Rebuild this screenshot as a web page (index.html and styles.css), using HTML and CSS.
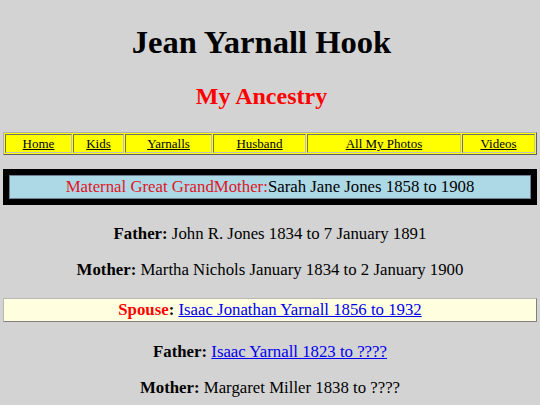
FILE: index.html
```html
<!DOCTYPE html>
<html>
<head>
<meta charset="utf-8">
<title>Jean Yarnall Hook - My Ancestry</title>
<link rel="stylesheet" href="styles.css">
</head>
<body>
<h1 class="title">Jean Yarnall Hook</h1>
<h2 class="subtitle">My Ancestry</h2>
<table class="nav">
<tr>
<td class="c-home"><a href="#">Home</a></td>
<td class="c-kids"><a href="#">Kids</a></td>
<td class="c-yarn"><a href="#">Yarnalls</a></td>
<td class="c-husb"><a href="#">Husband</a></td>
<td class="c-photos"><a href="#">All My Photos</a></td>
<td class="c-videos"><a href="#">Videos</a></td>
</tr>
</table>
<table class="person">
<tr><td><span class="rel">Maternal Great GrandMother:</span>Sarah Jane Jones 1858 to 1908</td></tr>
</table>
<p class="parent"><b>Father:</b> John R. Jones 1834 to 7 January 1891</p>
<p class="parent"><b>Mother:</b> Martha Nichols January 1834 to 2 January 1900</p>
<table class="spouse">
<tr><td><b><span class="sp">Spouse</span>:</b> <a href="#">Isaac Jonathan Yarnall 1856 to 1932</a></td></tr>
</table>
<p class="parent"><b>Father:</b> <a href="#">Isaac Yarnall 1823 to ????</a></p>
<p class="parent"><b>Mother:</b> Margaret Miller 1838 to ????</p>
</body>
</html>
```
FILE: styles.css
```css
html, body {
  background: #d3d3d3;
}
body {
  margin: 8px 3px;
  font-family: "Liberation Serif", "Times New Roman", serif;
  color: #000;
}
.title {
  text-align: center;
  font-size: 32.6px;
  margin: 16px 0 22px;
  padding-right: 17px;
}
.subtitle {
  text-align: center;
  color: #ff0000;
  font-size: 24px;
  margin: 0 0 22px;
  padding-right: 17px;
}
a {
  color: #0000ee;
}
.nav {
  width: 100%;
  table-layout: fixed;
  background: #ffff00;
  border: 1px solid #808080;
  border-color: #b0b0b0 #606060 #606060 #b0b0b0;
  border-spacing: 1px;
  font-size: 13px;
}
.nav td {
  box-sizing: border-box;
  text-align: center;
  border: 1px solid #808080;
  border-color: #707070 #c0c0c0 #c0c0c0 #707070;
  padding: 1px 0 0;
}
.nav a {
  color: #000;
}
.c-home { width: 67px; }
.c-kids { width: 51px; }
.c-yarn { width: 87px; }
.c-husb { width: 93px; }
.c-photos { width: 154px; }
.person {
  width: 100%;
  margin: 14px 0 19px;
  background: #000;
  border-spacing: 6px;
  font-size: 16.8px;
}
.person td {
  background: #add8e6;
  text-align: center;
  border: 1px solid #708090;
  padding: 1px;
}
.rel {
  color: #e2161e;
}
.parent {
  text-align: center;
  font-size: 16.8px;
  margin: 16px 0;
}
.spouse {
  width: 100%;
  margin: 18px 0 20px;
  background: #ffffe0;
  border: 1px solid #909090;
  border-color: #b8b8b8 #808080 #808080 #b8b8b8;
  border-spacing: 0;
  font-size: 16.8px;
}
.spouse td {
  text-align: center;
  padding: 1px;
}
.sp {
  color: #ff0000;
}
```
